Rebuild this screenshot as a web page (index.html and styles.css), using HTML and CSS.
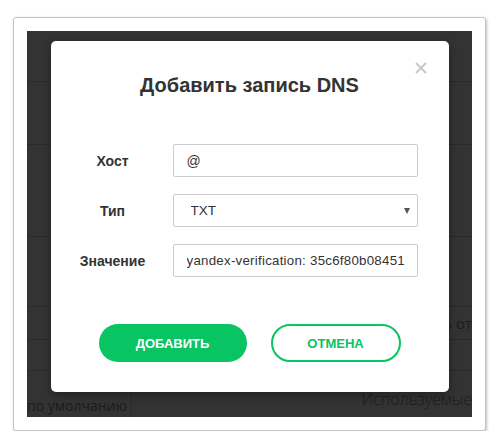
FILE: index.html
```html
<!DOCTYPE html>
<html lang="ru">
<head>
  <meta charset="UTF-8">
  <meta name="viewport" content="width=device-width, initial-scale=1.0">
  <title>Добавить запись DNS</title>
  <link rel="stylesheet" href="styles.css">
</head>
<body>

  <!-- Screenshot frame -->
  <div class="frame">
    <div class="shot">

      <!-- Page behind the dialog -->
      <div class="page">
        <div class="row row-1"></div>
        <div class="row row-2"></div>
        <div class="row row-3"></div>
        <div class="row row-4"></div>
        <div class="row row-5"><span class="cell-end">Наследовать от</span></div>
        <div class="row row-6"></div>
        <div class="row row-7">
          <span class="cell-a">по умолчанию</span>
          <span class="cell-b">Используемые</span>
        </div>
      </div>

      <!-- Dialog -->
      <div class="overlay">
        <div class="modal">
          <button class="close" type="button" aria-label="Закрыть">
            <svg width="12" height="12" viewBox="0 0 12 12">
              <path d="M1 1 L11 11 M11 1 L1 11" stroke="#c9c9c9" stroke-width="2" fill="none"/>
            </svg>
          </button>

          <h2 class="modal-title">Добавить запись DNS</h2>

          <form class="dns-form">
            <label class="form-label" for="host">Хост</label>
            <input class="field" id="host" type="text" value="@">

            <label class="form-label" for="type">Тип</label>
            <div class="select-wrap">
              <select class="field field-select" id="type">
                <option>TXT</option>
              </select>
            </div>

            <label class="form-label" for="value">Значение</label>
            <input class="field field-value" id="value" type="text" value="yandex-verification: 35c6f80b08451">
          </form>

          <div class="actions">
            <button class="btn btn-primary" type="button">Добавить</button>
            <button class="btn btn-outline" type="button">Отмена</button>
          </div>
        </div>
      </div>

    </div>
  </div>

</body>
</html>
```

FILE: styles.css
```css
:root {
  --green: #08c462;
  --text-color: #333;
  --border-color: #cccccc;
  --shade: #333333;
  --shade-line: #2a2a2a;
  --shade-text: #1c1c1c;
}

* {
  margin: 0;
  padding: 0;
  box-sizing: border-box;
}

body {
  font-family: 'Liberation Sans', Arial, sans-serif;
  background-color: #ffffff;
  color: var(--text-color);
}

/* Screenshot frame */
.frame {
  width: 473px;
  margin: 17px 0 0 13px;
  padding: 13px;
  background: #ffffff;
  border: 1px solid #c4c4c4;
  border-radius: 3px;
  box-shadow: 1px 1px 3px rgba(0, 0, 0, 0.25);
}

.shot {
  position: relative;
  height: 386px;
  background-color: var(--shade);
  overflow: hidden;
}

/* Darkened page behind the dialog */
.page {
  display: flex;
  flex-direction: column;
  font-family: 'Open Sans', sans-serif;
  color: var(--shade-text);
}

.row {
  display: flex;
  align-items: center;
  border-bottom: 1px solid var(--shade-line);
}

.row-1 { height: 51px; }
.row-2 { height: 63px; }
.row-3 { height: 92px; }
.row-4 { height: 70px; }
.row-5 { height: 33px; justify-content: flex-end; font-size: 15px; }
.row-6 { height: 31px; }
.row-7 { height: 46px; align-items: stretch; border-bottom: none; }

.cell-end {
  white-space: nowrap;
}

.cell-a {
  width: 105px;
  padding-top: 25px;
  font-size: 14px;
  border-right: 1px solid var(--shade-line);
  white-space: nowrap;
}

.cell-b {
  flex: 1;
  padding-top: 17px;
  font-size: 16px;
  font-weight: 300;
  text-align: right;
  white-space: nowrap;
}

/* Dialog */
.overlay {
  position: absolute;
  inset: 0;
  display: flex;
  justify-content: center;
  align-items: flex-start;
  padding-top: 10px;
}

.modal {
  position: relative;
  width: 398px;
  padding: 32px 0 30px;
  background: #ffffff;
  border-radius: 5px;
  box-shadow: 0 3px 10px rgba(0, 0, 0, 0.35);
}

.close {
  position: absolute;
  top: 21px;
  right: 22px;
  width: 12px;
  height: 12px;
  border: none;
  background: none;
  display: flex;
  cursor: pointer;
}

.modal-title {
  font-size: 20px;
  line-height: 24px;
  font-weight: 700;
  text-align: center;
  color: var(--text-color);
}

/* Form */
.dns-form {
  display: grid;
  grid-template-columns: 80px 245px;
  column-gap: 20px;
  row-gap: 17px;
  align-items: center;
  margin: 47px 0 0 22px;
}

.form-label {
  font-size: 14px;
  font-weight: 700;
  text-align: center;
  color: var(--text-color);
}

.field {
  width: 245px;
  height: 33px;
  padding: 0 12px 0 13px;
  font-family: 'Liberation Sans', Arial, sans-serif;
  font-size: 14px;
  color: var(--text-color);
  background: #ffffff;
  border: 1px solid var(--border-color);
  border-radius: 2px;
  outline: none;
}

.field-value {
  font-size: 13.3px;
  letter-spacing: 0.25px;
}

.select-wrap {
  position: relative;
}

.field-select {
  appearance: none;
  -webkit-appearance: none;
  padding-left: 17px;
  font-size: 13.5px;
}

.select-wrap::after {
  content: '';
  position: absolute;
  right: 8px;
  top: 14px;
  border-left: 3px solid transparent;
  border-right: 3px solid transparent;
  border-top: 6px solid #555;
}

/* Buttons */
.actions {
  display: flex;
  justify-content: center;
  gap: 24px;
  margin-top: 47px;
}

.btn {
  height: 38px;
  border-radius: 19px;
  font-family: 'Liberation Sans', Arial, sans-serif;
  font-size: 13px;
  font-weight: 700;
  text-transform: uppercase;
  cursor: pointer;
}

.btn-primary {
  width: 148px;
  background: var(--green);
  color: #ffffff;
  border: none;
}

.btn-outline {
  width: 130px;
  background: #ffffff;
  color: var(--green);
  border: 2px solid var(--green);
}
```
